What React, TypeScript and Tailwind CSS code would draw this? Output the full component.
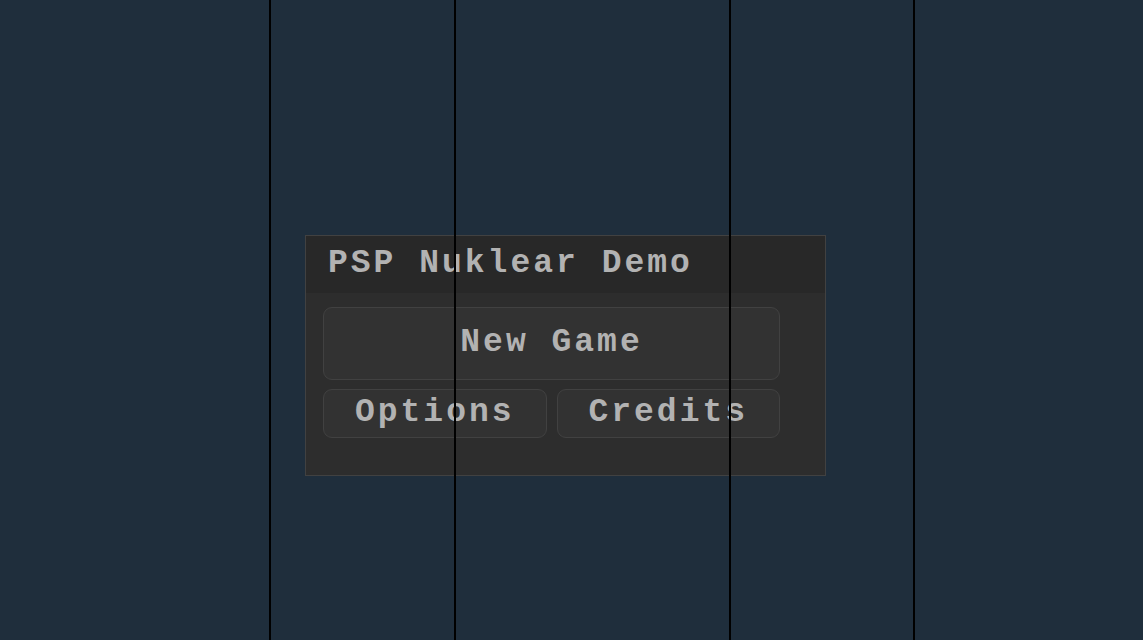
export default function App() {
  const lines = [269, 454, 729, 913];

  return (
    <div
      className="relative h-[640px] w-[1143px] overflow-hidden bg-[#1f2e3c] pl-[305px] pt-[235px]"
      style={{ fontFamily: '"Liberation Mono", "DejaVu Sans Mono", monospace' }}
    >
      <div className="flex h-[241px] w-[521px] flex-col border border-[#414141] bg-[#2d2d2d]">
        <div className="flex h-[57px] items-center bg-[#282828] pb-[3px] pl-[22px]">
          <span className="text-[33px] font-bold leading-none tracking-[3px] text-[#b2b2b2]">
            PSP Nuklear Demo
          </span>
        </div>
        <div className="flex flex-col gap-[9px] pl-[17px] pr-[45px] pt-[14px]">
          <button className="flex h-[73px] items-center justify-center rounded-[9px] border border-[#414141] bg-[#323232] pb-[3px] text-[33px] font-bold leading-none tracking-[3px] text-[#b2b2b2]">
            New Game
          </button>
          <div className="grid grid-cols-2 gap-[10px]">
            <button className="flex h-[49px] items-center justify-center rounded-[9px] border border-[#414141] bg-[#323232] pb-[3px] text-[33px] font-bold leading-none tracking-[3px] text-[#b2b2b2]">
              Options
            </button>
            <button className="flex h-[49px] items-center justify-center rounded-[9px] border border-[#414141] bg-[#323232] pb-[3px] text-[33px] font-bold leading-none tracking-[3px] text-[#b2b2b2]">
              Credits
            </button>
          </div>
        </div>
      </div>

      {lines.map((x) => (
        <div
          key={x}
          className="absolute top-0 h-full w-[2px] bg-black"
          style={{ left: x }}
        />
      ))}
    </div>
  );
}
